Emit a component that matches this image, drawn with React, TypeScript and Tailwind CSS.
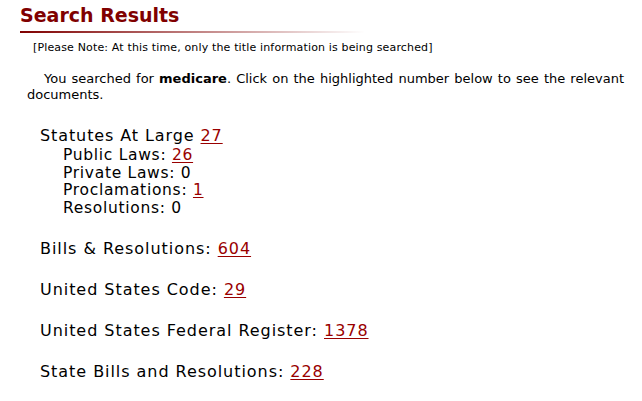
export default function App() {
  const sub = [
    { label: 'Public Laws:', count: 26 },
    { label: 'Private Laws:', count: 0 },
    { label: 'Proclamations:', count: 1 },
    { label: 'Resolutions:', count: 0 },
  ];

  const sections = [
    { label: 'Bills & Resolutions:', count: 604 },
    { label: 'United States Code:', count: 29 },
    { label: 'United States Federal Register:', count: 1378 },
    { label: 'State Bills and Resolutions:', count: 228 },
  ];

  const link = 'text-[#990000] underline underline-offset-2';

  return (
    <div className="w-[642px] h-[401px] bg-white text-black overflow-hidden" style={{ fontFamily: '"DejaVu Sans", Verdana, sans-serif' }}>
      <div className="pl-[20px] pt-[4px]">
        <h1 className="text-[19px] font-bold leading-[23px] text-[#800000]">Search Results</h1>
        <div className="mt-[4px] h-[2px] w-[345px] bg-gradient-to-r from-[#800000] to-transparent" />
      </div>

      <p className="mt-[8px] ml-[33px] text-[11px] leading-[14px] tracking-[0.15px]">
        [Please Note: At this time, only the title information is being searched]
      </p>

      <p className="mt-[16px] ml-[27px] mr-[18px] text-[13px] leading-[16px] text-justify indent-[17px]">
        You searched for <b>medicare</b>. Click on the highlighted number below to see the relevant documents.
      </p>

      <div className="ml-[40px] mt-[22px] text-[16px] tracking-[0.9px]">
        <div className="leading-[22px]">
          Statutes At Large <a className={link}>27</a>
        </div>
        <div className="pl-[23px] text-[15.5px] leading-[17.7px] tracking-[0.7px]">
          {sub.map((s) => (
            <div key={s.label}>
              {s.label} {s.count > 0 ? <a className={link}>{s.count}</a> : s.count}
            </div>
          ))}
        </div>

        {sections.map((s) => (
          <div key={s.label} className="mt-[21px] leading-[20px] tracking-[0.95px]">
            {s.label} <a className={link}>{s.count}</a>
          </div>
        ))}
      </div>
    </div>
  );
}
